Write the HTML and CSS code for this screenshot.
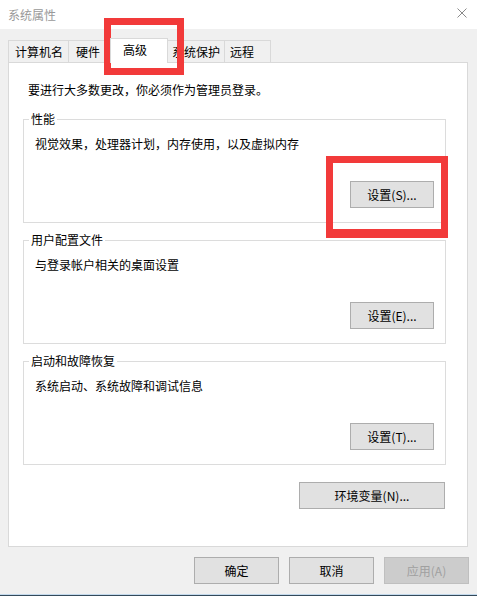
FILE: index.html
```html
<!DOCTYPE html>
<html lang="zh-CN">
<head>
<meta charset="utf-8">
<title>系统属性</title>
<link rel="stylesheet" href="styles.css">
</head>
<body>
<div class="window">
  <div class="titlebar">
    <span class="title">系统属性</span>
    <svg class="close" width="10" height="10" viewBox="0 0 10 10"><path d="M0.5 0.5 L9.5 9.5 M9.5 0.5 L0.5 9.5" stroke="#8a8a8a" stroke-width="1" fill="none"/></svg>
  </div>
  <div class="tabs">
    <div class="tab t1">计算机名</div>
    <div class="tab t2">硬件</div>
    <div class="tab active">高级</div>
    <div class="tab t4">系统保护</div>
    <div class="tab t5">远程</div>
  </div>
  <div class="panel">
    <p class="intro">要进行大多数更改，你必须作为管理员登录。</p>
    <div class="group first">
      <span class="legend">性能</span>
      <p class="desc">视觉效果，处理器计划，内存使用，以及虚拟内存</p>
      <button class="btn set">设置(S)...</button>
    </div>
    <div class="group">
      <span class="legend">用户配置文件</span>
      <p class="desc">与登录帐户相关的桌面设置</p>
      <button class="btn set">设置(E)...</button>
    </div>
    <div class="group">
      <span class="legend">启动和故障恢复</span>
      <p class="desc">系统启动、系统故障和调试信息</p>
      <button class="btn set">设置(T)...</button>
    </div>
    <button class="btn env">环境变量(N)...</button>
  </div>
  <div class="actions">
    <button class="btn act">确定</button>
    <button class="btn act">取消</button>
    <button class="btn act disabled">应用(A)</button>
  </div>
  <div class="strip"></div>
</div>
<div class="mark mark-tab"></div>
<div class="mark mark-btn"></div>
</body>
</html>
```
FILE: styles.css
```css
html, body {
  margin: 0;
  padding: 0;
}
body {
  width: 477px;
  height: 596px;
  overflow: hidden;
  background: #f0f0f0;
  font-family: "Noto Sans CJK SC", "Noto Sans", sans-serif;
  font-size: 12px;
  line-height: 16px;
  color: #000;
}
.window {
  display: flex;
  flex-direction: column;
  height: 596px;
}
.titlebar {
  height: 29px;
  background: #fff;
  display: flex;
  align-items: center;
  justify-content: space-between;
  padding: 0 10px 0 8px;
  box-sizing: border-box;
  flex: none;
}
.title {
  color: #999;
}
.close {
  margin-bottom: 3px;
}
.tabs {
  display: flex;
  align-items: flex-end;
  margin: 9px 0 0 8px;
  flex: none;
}
.tab {
  box-sizing: border-box;
  height: 22px;
  padding-top: 3px;
  border-top: 1px solid #d9d9d9;
  border-left: 1px solid #d9d9d9;
  background: #f0f0f0;
  white-space: nowrap;
}
.t1 { width: 60px; padding-left: 6px; }
.t2 { width: 44px; padding-left: 7px; }
.t4 { width: 58px; padding-left: 5px; }
.t5 { width: 47px; padding-left: 5px; border-right: 1px solid #d9d9d9; }
.tab.active {
  position: relative;
  z-index: 1;
  width: 58px;
  height: 25px;
  margin: 0 -2px -1px -2px;
  padding-left: 12px;
  background: #fff;
  border-right: 1px solid #d9d9d9;
}
.panel {
  box-sizing: border-box;
  height: 485px;
  margin: 0 9px 0 8px;
  border: 1px solid #d9d9d9;
  background: #fff;
  padding: 19px 21px 0 14px;
  display: flex;
  flex-direction: column;
  flex: none;
}
.intro {
  margin: 0 0 0 5px;
}
.group {
  box-sizing: border-box;
  height: 104px;
  border: 1px solid #dcdcdc;
  margin-top: 17px;
  padding: 0 11px 14px 11px;
  display: flex;
  flex-direction: column;
}
.group.first {
  margin-top: 21px;
}
.legend {
  display: block;
  width: max-content;
  margin: -9px 0 0 -6px;
  padding: 0 2px;
  background: #fff;
}
.desc {
  margin: 9px 0 0 0;
}
.btn {
  font-family: inherit;
  font-size: 12px;
  line-height: 16px;
  color: #000;
  background: #e1e1e1;
  border: 1px solid #adadad;
  height: 27px;
  padding: 0;
  box-sizing: border-box;
  border-radius: 0;
}
.set {
  width: 84px;
  margin-top: auto;
  align-self: flex-end;
}
.env {
  width: 146px;
  margin: 17px 1px 0 0;
  align-self: flex-end;
}
.actions {
  display: flex;
  justify-content: flex-end;
  gap: 10px;
  margin: 10px 8px 0 0;
  flex: none;
}
.act {
  width: 85px;
}
.disabled {
  background: #cccccc;
  border-color: #bfbfbf;
  color: #a0a0a0;
}
.strip {
  margin-top: auto;
  height: 2px;
  border-top: 1px solid #c3d9ec;
  background: #34495a;
  box-sizing: border-box;
  flex: none;
}
.mark {
  position: absolute;
  box-sizing: border-box;
  border: 7px solid #f23a3a;
}
.mark-tab {
  left: 104px;
  top: 18px;
  width: 80px;
  height: 57px;
}
.mark-btn {
  left: 326px;
  top: 156px;
  width: 122px;
  height: 82px;
  border-bottom-width: 9px;
}
```
